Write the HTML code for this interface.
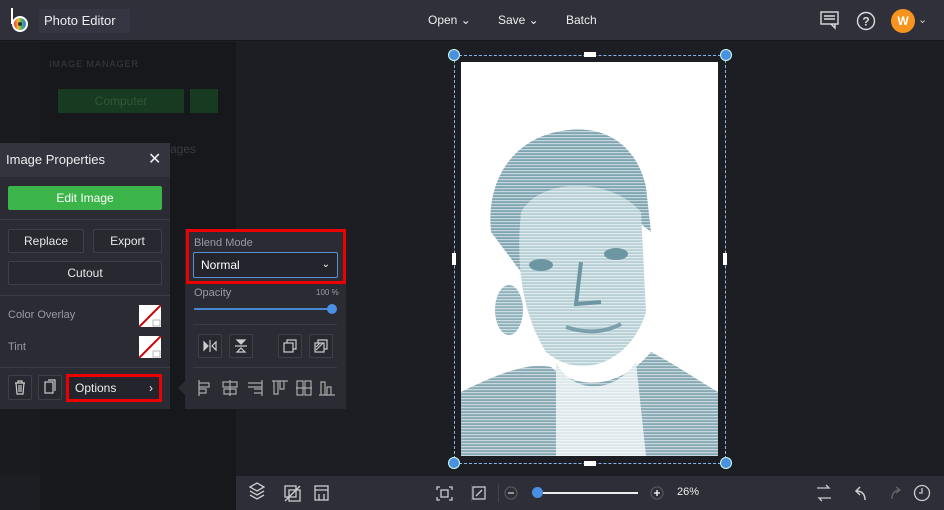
<!DOCTYPE html>
<html><head><meta charset="utf-8"><style>
*{box-sizing:border-box;margin:0;padding:0}
body{width:944px;height:510px;overflow:hidden;background:#1d1e23;font-family:"Liberation Sans",sans-serif;position:relative;color:#ddd}
.abs{position:absolute}
.top{left:0;top:0;width:944px;height:41px;background:#2f3039;border-bottom:1px solid #17181c}
.btn{position:absolute;border:1px solid #3e3f49;background:#272830;color:#e8e8e8;font-size:12px;text-align:center;border-radius:2px}
.lbl{font-size:11px;color:#9a9ba3}
</style></head><body>
<div class="abs top">
 <svg class="abs" style="left:9px;top:8px" width="22" height="26"><line x1="3" y1="0" x2="3" y2="16" stroke="#fff" stroke-width="2"/><circle cx="11" cy="16" r="8" fill="#fff"/><circle cx="11" cy="16" r="6" fill="url(#g)"/><defs><linearGradient id="g"><stop offset="0" stop-color="#e33"/><stop offset=".35" stop-color="#fb3"/><stop offset=".65" stop-color="#3b6"/><stop offset="1" stop-color="#56e"/></linearGradient></defs><circle cx="11" cy="16" r="2" fill="#333"/></svg>
 <div class="abs" style="left:39px;top:9px;width:91px;height:24px;background:#353641;font-size:13px;color:#eee;line-height:24px;padding-left:5px">Photo Editor ⌄</div>
 <div class="abs" style="left:428px;top:13px;font-size:12px;color:#eee">Open ⌄</div>
 <div class="abs" style="left:498px;top:13px;font-size:12px;color:#eee">Save ⌄</div>
 <div class="abs" style="left:566px;top:13px;font-size:12px;color:#eee">Batch</div>
 <svg class="abs" style="left:820px;top:11px" width="20" height="19" fill="none" stroke="#ddd" stroke-width="1.4"><rect x="1" y="1" width="17" height="12"/><path d="M11 13l4 4v-4M4 5h11M4 8h11"/></svg>
 <svg class="abs" style="left:856px;top:11px" width="20" height="20" fill="none" stroke="#ddd" stroke-width="1.4"><circle cx="10" cy="10" r="8.5"/><text x="10" y="14.5" font-size="12" fill="#ddd" stroke="none" text-anchor="middle" font-family="Liberation Sans" font-weight="bold">?</text></svg>
 <div class="abs" style="left:891px;top:9px;width:24px;height:24px;border-radius:50%;background:#f7941d;color:#fff;font-size:12px;font-weight:bold;text-align:center;line-height:24px">W</div>
 <div class="abs" style="left:918px;top:13px;font-size:11px;color:#ccc">⌄</div>
</div>
<div class="abs" style="left:0;top:42px;width:40px;height:434px;background:#1a1b1f"></div>
<div class="abs" style="left:40px;top:42px;width:196px;height:468px;background:#17181c"></div>
<div class="abs" style="left:49px;top:59px;font-size:9px;color:#3a3b40;letter-spacing:1px">IMAGE MANAGER</div>
<div class="abs" style="left:58px;top:89px;width:126px;height:24px;background:#173a20;color:#2f5a36;font-size:12px;text-align:center;line-height:24px">Computer</div>
<div class="abs" style="left:190px;top:89px;width:28px;height:24px;background:#173a20"></div>
<div class="abs" style="left:170px;top:142px;font-size:12px;color:#3a3b40">ages</div>
<div class="abs" style="left:0;top:143px;width:170px;height:266px;background:#2a2b33">
 <div style="height:34px;background:#33343d;font-size:13px;color:#eee;line-height:34px;padding-left:6px">Image Properties<span style="position:absolute;left:148px;top:0;font-size:16px">✕</span></div>
 <div class="abs" style="left:8px;top:43px;width:154px;height:24px;background:#3bb54a;color:#fff;font-size:12px;text-align:center;line-height:24px;border-radius:2px">Edit Image</div>
 <div class="abs" style="left:0;top:76px;width:170px;height:1px;background:#3a3b44"></div>
 <div class="btn" style="left:8px;top:86px;width:76px;height:24px;line-height:22px">Replace</div>
 <div class="btn" style="left:93px;top:86px;width:69px;height:24px;line-height:22px">Export</div>
 <div class="btn" style="left:8px;top:118px;width:154px;height:24px;line-height:22px">Cutout</div>
 <div class="abs" style="left:0;top:152px;width:170px;height:1px;background:#3a3b44"></div>
 <div class="abs lbl" style="left:8px;top:166px">Color Overlay</div>
 <div class="abs lbl" style="left:8px;top:198px">Tint</div>
 <svg class="abs" style="left:139px;top:162px" width="22" height="22"><rect width="22" height="22" fill="#fff"/><line x1="0" y1="22" x2="22" y2="0" stroke="#c00" stroke-width="2"/><rect x="14" y="15" width="7" height="6" fill="#fff" stroke="#999" stroke-width=".7"/></svg>
 <svg class="abs" style="left:139px;top:193px" width="22" height="22"><rect width="22" height="22" fill="#fff"/><line x1="0" y1="22" x2="22" y2="0" stroke="#c00" stroke-width="2"/><rect x="14" y="15" width="7" height="6" fill="#fff" stroke="#999" stroke-width=".7"/></svg>
 <div class="abs" style="left:0;top:224px;width:170px;height:1px;background:#3a3b44"></div>
 <div class="btn" style="left:8px;top:232px;width:24px;height:25px"><svg width="22" height="23" fill="none" stroke="#ccc" stroke-width="1.2"><path d="M6 7h10M9 7V5h4v2M7 7l1 11h6l1-11M10 9v7M12 9v7"/></svg></div>
 <div class="btn" style="left:38px;top:232px;width:24px;height:25px"><svg width="22" height="23" fill="none" stroke="#ccc" stroke-width="1.2"><rect x="6" y="6" width="8" height="11"/><path d="M9 4h7v11"/></svg></div>
 <div class="abs" style="left:66px;top:231px;width:96px;height:28px;border:3px solid #e00;background:#24252c;color:#eee;font-size:12px;line-height:22px;padding-left:6px">Options<span style="position:absolute;right:6px">›</span></div>
</div>
<div class="abs" style="left:185px;top:229px;width:161px;height:180px;background:#2a2b33"></div>
<div class="abs" style="left:178px;top:381px;width:0;height:0;border:7px solid transparent;border-right-color:#2a2b33;border-left:0"></div>
<div class="abs" style="left:186px;top:229px;width:160px;height:55px;border:3px solid #e00"></div>
<div class="abs lbl" style="left:194px;top:237px">Blend Mode</div>
<div class="abs" style="left:193px;top:252px;width:145px;height:26px;border:1px solid #5b8fd0;border-radius:2px;background:#24252c;font-size:12px;color:#fff;line-height:24px;padding-left:7px">Normal<span style="position:absolute;right:7px;font-size:10px">⌄</span></div>
<div class="abs lbl" style="left:194px;top:287px">Opacity</div>
<div class="abs" style="left:316px;top:288px;font-size:8px;color:#9a9ba3">100 %</div>
<div class="abs" style="left:194px;top:308px;width:138px;height:2px;background:#4a85d0"></div>
<div class="abs" style="left:327px;top:304px;width:10px;height:10px;border-radius:50%;background:#4a90e2"></div>
<div class="abs" style="left:193px;top:324px;width:144px;height:1px;background:#3a3b44"></div>
<div class="btn" style="left:198px;top:334px;width:24px;height:24px"><svg width="22" height="22" fill="none" stroke="#ccc" stroke-width="1.2"><path d="M5 7v8l4-4z" fill="#ccc"/><path d="M11 5v12M17 7v8l-4-4z"/></svg></div>
<div class="btn" style="left:229px;top:334px;width:24px;height:24px"><svg width="22" height="22" fill="none" stroke="#ccc" stroke-width="1.2"><path d="M7 5h8l-4 4z" fill="#ccc"/><path d="M5 11h12M7 17h8l-4-4z"/></svg></div>
<div class="btn" style="left:278px;top:334px;width:24px;height:24px"><svg width="22" height="22" fill="none" stroke="#ccc" stroke-width="1.2"><rect x="5" y="8" width="9" height="9"/><path d="M8 8V5h9v9h-3"/></svg></div>
<div class="btn" style="left:309px;top:334px;width:24px;height:24px"><svg width="22" height="22" fill="none" stroke="#ccc" stroke-width="1.2"><rect x="5" y="8" width="9" height="9"/><path d="M8 8V5h9v9h-3M6 15l7-7M6 12l4-4"/></svg></div>
<div class="abs" style="left:193px;top:367px;width:144px;height:1px;background:#3a3b44"></div>
<svg class="abs" style="left:196px;top:378px" width="144" height="22" fill="none" stroke="#aaa" stroke-width="1.2">
 <path d="M3 2v16M3 5h10v4H3M3 11h7v4H3"/>
 <path d="M34 2v16M27 4h14v5H27zM28 11h12v5H28z"/>
 <path d="M66 2v16M52 5h14v4H52M58 11h8v4h-8"/>
 <path d="M76 3h16M78 3v13h4V3M84 3v8h4V3"/>
 <path d="M100 10h16M101 3h6v14h-6zM109 3h6v14h-6z"/>
 <path d="M123 17h16M125 17V4h4v13M131 17V9h4v8"/>
</svg>
<div class="abs" style="left:461px;top:62px;width:257px;height:394px;background:#fff;overflow:hidden">
 <svg width="257" height="394">
  <defs><pattern id="ln" width="4" height="3" patternUnits="userSpaceOnUse"><rect width="4" height="1.2" fill="#fff" opacity=".55"/></pattern></defs>
  <path d="M30 170 C25 120 50 80 95 70 C140 60 175 80 185 125 L190 170 L140 130 L80 135 L60 210 Z" fill="#7ea5b1"/>
  <path d="M60 150 C80 115 150 115 180 150 L185 250 C170 300 120 320 85 290 C60 250 55 200 60 150Z" fill="#b7d0d6"/>
  <ellipse cx="48" cy="248" rx="14" ry="25" fill="#8fb1bb"/>
  <path d="M0 330 C40 310 70 300 90 305 C120 330 160 325 190 290 C210 300 240 320 257 330 L257 394 L0 394Z" fill="#86a9b4"/>
  <path d="M95 300 C110 330 150 335 175 300 L185 394 L95 394Z" fill="#dce8eb"/>
  <rect width="257" height="394" fill="url(#ln)"/>
  <ellipse cx="80" cy="203" rx="12" ry="6" fill="#6d96a3"/><ellipse cx="155" cy="192" rx="12" ry="6" fill="#6d96a3"/>
  <path d="M120 200 L115 242 L140 240" fill="none" stroke="#6d96a3" stroke-width="4"/>
  <path d="M105 265 Q135 275 160 262" fill="none" stroke="#7aa0ac" stroke-width="4"/>
 </svg>
</div>
<div class="abs" style="left:454px;top:55px;width:272px;height:409px;border:1.5px dashed #8ab4e8"></div>
<div class="abs" style="left:448px;top:49px;width:12px;height:12px;border-radius:50%;background:#4a90e2;border:1px solid #cfe"></div>
<div class="abs" style="left:720px;top:49px;width:12px;height:12px;border-radius:50%;background:#4a90e2;border:1px solid #cfe"></div>
<div class="abs" style="left:448px;top:457px;width:12px;height:12px;border-radius:50%;background:#4a90e2;border:1px solid #cfe"></div>
<div class="abs" style="left:720px;top:457px;width:12px;height:12px;border-radius:50%;background:#4a90e2;border:1px solid #cfe"></div>
<div class="abs" style="left:584px;top:52px;width:12px;height:5px;background:#fff"></div>
<div class="abs" style="left:584px;top:461px;width:12px;height:5px;background:#fff"></div>
<div class="abs" style="left:452px;top:253px;width:4px;height:12px;background:#fff"></div>
<div class="abs" style="left:723px;top:253px;width:4px;height:12px;background:#fff"></div>
<div class="abs" style="left:236px;top:476px;width:708px;height:34px;background:#2d2e37"></div>
<svg class="abs" style="left:236px;top:476px" width="708" height="34" fill="none" stroke="#ccc" stroke-width="1.3">
 <path d="M14 11l7-4 7 4-7 4zM14 15l7 4 7-4M14 19l7 4 7-4"/>
 <rect x="49" y="10" width="11" height="11"/><rect x="53" y="14" width="11" height="11"/><path d="M49 25L64 10"/>
 <rect x="79" y="10" width="13" height="14"/><path d="M79 14h13M83 18v6M88 18v6"/>
 <path d="M204 11h-3v3M213 11h3v3M204 24h-3v-3M213 24h3v-3"/><rect x="205" y="14" width="7" height="7"/>
 <rect x="237" y="11" width="12" height="12"/><path d="M240 20l6-6"/>
 <circle cx="275" cy="17" r="6" stroke="#555"/><path d="M272 17h6"/>
 <circle cx="421" cy="17" r="6" stroke="#555"/><path d="M418 17h6M421 14v6" stroke="#fff"/>
 <path d="M581 12h12l-3-3M595 22h-12l3 3"/>
 <path d="M624 11l-4 4 4 4M620 15c6 0 9 3 9 9" stroke-width="1.5"/>
 <path d="M656 23c0-6 3-9 8-9M660 11l4 3-4 3" stroke="#666"/>
 <circle cx="686" cy="17" r="7.5"/><path d="M686 12v5h-3"/>
</svg>
<div class="abs" style="left:534px;top:492px;width:104px;height:2px;background:#eee"></div>
<div class="abs" style="left:532px;top:487px;width:11px;height:11px;border-radius:50%;background:#4a90e2"></div>
<div class="abs" style="left:677px;top:486px;font-size:11px;color:#eee">26%</div>
<div class="abs" style="left:471px;top:484px;width:1px;height:18px;background:#444"></div>
<div class="abs" style="left:498px;top:484px;width:1px;height:18px;background:#444"></div>
</body></html>
